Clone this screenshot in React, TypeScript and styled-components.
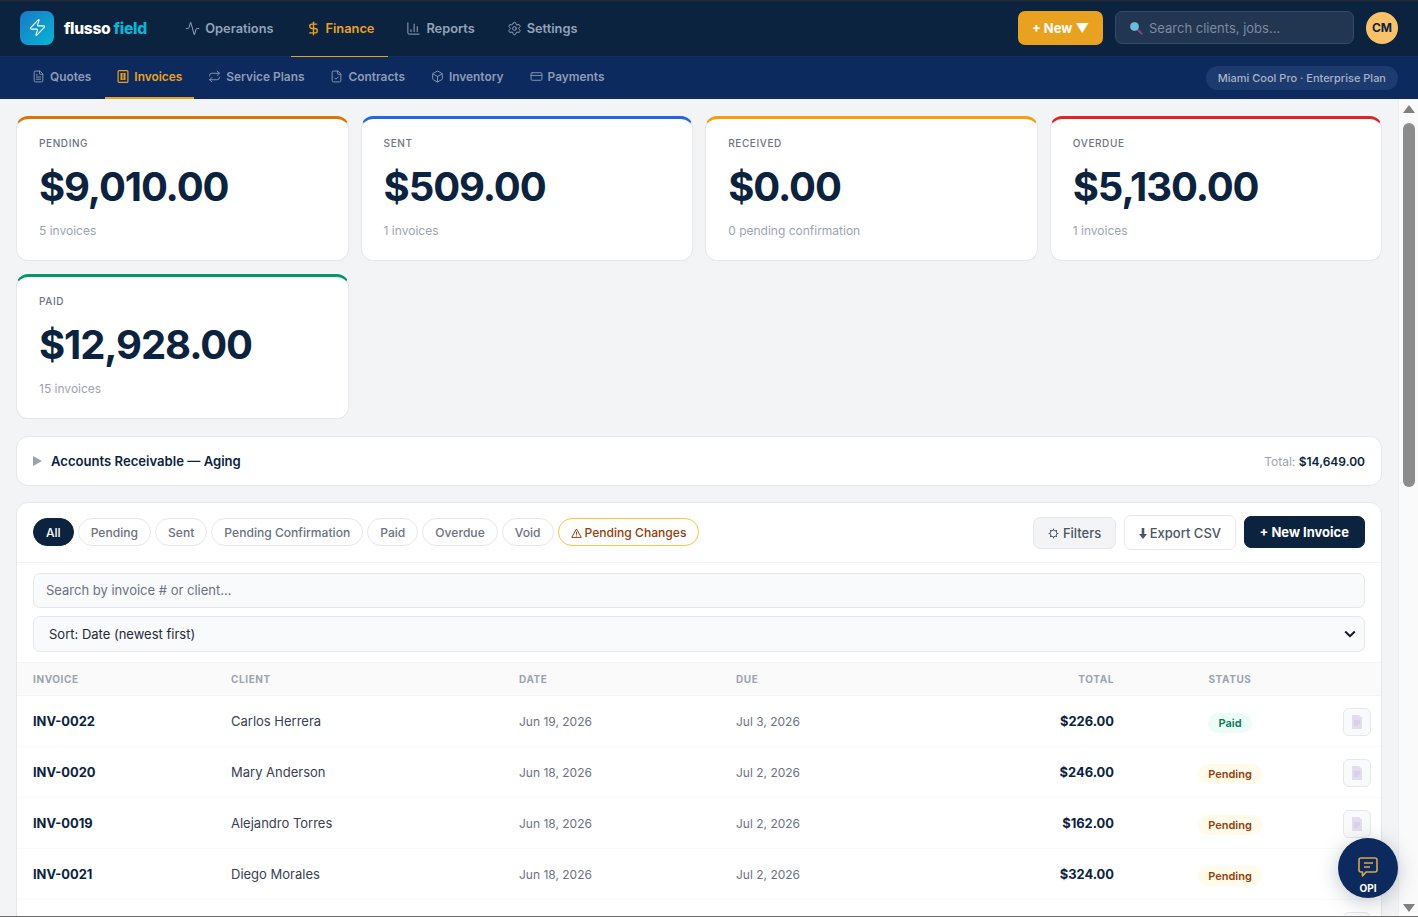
import type { FC, ReactNode } from 'react';
import {
  Activity,
  Box,
  ChartColumn,
  CreditCard,
  DollarSign,
  FileCheck,
  FileText,
  Repeat,
  Settings,
  Zap
} from 'lucide-react';
import styled, { createGlobalStyle } from 'styled-components';

const GlobalStyle = createGlobalStyle`
  html, body {
    margin: 0;
    height: 100%;
    overflow: hidden;
  }
  * {
    box-sizing: border-box;
  }
  body {
    font-family: Inter, "Liberation Sans", sans-serif;
    color: #0c2340;
    background: #f3f4f6;
  }
`;

const Shell = styled.div`
  display: flex;
  flex-direction: column;
  height: 917px;
  overflow: hidden;
  position: relative;
  border-bottom: 1px solid #6b6b6b;
`;

const TopBar = styled.header`
  display: flex;
  align-items: center;
  height: 57px;
  flex-shrink: 0;
  padding: 0 20px 2px;
  background: #0c2340;
  border-top: 1px solid #2a2a2a;
  border-bottom: 1px solid #14305c;
`;

const LogoMark = styled.div`
  display: flex;
  align-items: center;
  justify-content: center;
  width: 34px;
  height: 34px;
  border-radius: 8px;
  color: #fff;
  background: linear-gradient(135deg, #1a78c8, #06b6d4);
`;

const LogoText = styled.div`
  margin: 1px 23.5px 0 10px;
  font-size: 15.6px;
  font-weight: 800;
  letter-spacing: -0.3px;
  color: #fff;
  span {
    color: #06b6d4;
  }
`;

const MainNav = styled.nav`
  display: flex;
  align-self: stretch;
  gap: 3px;
  margin-bottom: -2px;
`;

const MainNavItem = styled.a<{ $active?: boolean }>`
  display: flex;
  align-items: center;
  gap: 5px;
  padding: 0 14px 0 15px;
  margin-bottom: -1px;
  font-size: 12.8px;
  font-weight: 600;
  color: ${(p) => (p.$active ? '#e9a21f' : '#94a3b8')};
  border-bottom: 1px solid ${(p) => (p.$active ? '#e9a21f' : 'transparent')};
`;

const TopRight = styled.div`
  display: flex;
  align-items: center;
  margin-left: auto;
`;

const NewButton = styled.button`
  width: 85px;
  height: 34px;
  border: 0;
  border-radius: 7px;
  font-family: inherit;
  font-size: 13px;
  font-weight: 700;
  color: #fff;
  background: #e9a21f;
`;

const TopSearch = styled.div`
  display: flex;
  align-items: center;
  gap: 6px;
  width: 239px;
  height: 33px;
  margin: 0 12px;
  padding-left: 13px;
  border: 1px solid #35496a;
  border-radius: 7px;
  font-size: 13px;
  color: #7c8aa0;
  background: #233651;
`;

const Avatar = styled.div`
  display: flex;
  align-items: center;
  justify-content: center;
  width: 32px;
  height: 32px;
  border-radius: 50%;
  font-size: 12px;
  font-weight: 700;
  color: #0c2340;
  background: #fbc268;
`;

const SubBar = styled.div`
  display: flex;
  align-items: stretch;
  height: 42px;
  flex-shrink: 0;
  padding: 0 20px;
  background: #0c2a5e;
`;

const SubNavItem = styled.a<{ $active?: boolean }>`
  display: flex;
  align-items: center;
  gap: 5px;
  padding: 0 12px 1px;
  margin-right: 2px;
  font-size: 11.9px;
  font-weight: 600;
  color: ${(p) => (p.$active ? '#e9a21f' : '#8d9cb6')};
  border-bottom: 2px solid ${(p) => (p.$active ? '#e9a21f' : 'transparent')};
`;

const PlanPill = styled.div`
  align-self: center;
  margin-left: auto;
  padding: 5px 12px;
  border-radius: 12px;
  font-size: 11px;
  font-weight: 500;
  line-height: 14px;
  color: #a5b3c9;
  background: #1d3b6e;
`;

const Body = styled.div`
  display: flex;
  flex: 1;
  min-height: 0;
`;

const Content = styled.main`
  flex: 1;
  min-width: 0;
  padding: 17px 16px 0;
  overflow: hidden;
`;

const ScrollTrack = styled.div`
  display: flex;
  flex-direction: column;
  align-items: center;
  width: 20px;
  padding: 6px 0 4px;
  background: #fafafa;
  border-left: 1px solid #eeeeee;
`;

const ScrollArrow = styled.div<{ $down?: boolean }>`
  width: 0;
  height: 0;
  border-left: 6px solid transparent;
  border-right: 6px solid transparent;
  ${(p) =>
    p.$down
      ? 'border-top: 8px solid #7f7f7f; margin-top: auto;'
      : 'border-bottom: 8px solid #7f7f7f;'}
`;

const ScrollThumb = styled.div`
  width: 12px;
  height: 364px;
  margin-top: 10px;
  border-radius: 6px;
  background: #8c8c8c;
`;

const StatGrid = styled.section`
  display: grid;
  grid-template-columns: repeat(4, 332.6px);
  gap: 13px 12px;
`;

const StatCard = styled.div<{ $accent: string }>`
  height: 145px;
  padding: 18px 22px 0;
  border: 1px solid #e5e7eb;
  border-top: 3px solid ${(p) => p.$accent};
  border-radius: 12px;
  background: #fff;
`;

const StatLabel = styled.div`
  font-size: 10px;
  font-weight: 500;
  line-height: 12px;
  letter-spacing: 0.6px;
  color: #6b7280;
`;

const StatValue = styled.div`
  margin-top: 14px;
  font-size: 40px;
  font-weight: 700;
  line-height: 48px;
  letter-spacing: -1.1px;
  color: #0c2340;
`;

const StatNote = styled.div`
  margin-top: 12px;
  font-size: 12px;
  line-height: 16px;
  color: #9ca3af;
`;

const AgingBar = styled.div`
  display: flex;
  align-items: center;
  height: 50px;
  margin-top: 17px;
  padding: 0 16px;
  border: 1px solid #e5e7eb;
  border-radius: 12px;
  background: #fff;
`;

const AgingCaret = styled.span`
  width: 0;
  height: 0;
  margin-right: 9px;
  border-top: 5px solid transparent;
  border-bottom: 5px solid transparent;
  border-left: 9px solid #9ca3af;
`;

const AgingTitle = styled.div`
  font-size: 13.1px;
  font-weight: 600;
  color: #0c2340;
`;

const AgingTotal = styled.div`
  margin-left: auto;
  font-size: 12px;
  color: #9ca3af;
  b {
    font-weight: 600;
    color: #0c2340;
  }
`;

const TableCard = styled.section`
  margin-top: 16px;
  border: 1px solid #e5e7eb;
  border-radius: 12px;
  background: #fff;
`;

const Toolbar = styled.div`
  display: flex;
  align-items: center;
  gap: 4px;
  height: 60px;
  padding: 0 16px 1px;
  border-bottom: 1px solid #f3f4f6;
`;

const Tab = styled.button<{ $active?: boolean; $warn?: boolean }>`
  height: 28px;
  padding: 0 12px;
  border-radius: 14px;
  font-family: inherit;
  font-size: 12.1px;
  font-weight: 500;
  border: 1px solid
    ${(p) => (p.$active ? '#0c2340' : p.$warn ? '#f5c542' : '#e5e7eb')};
  color: ${(p) => (p.$active ? '#fff' : p.$warn ? '#92400e' : '#6b7280')};
  background: ${(p) => (p.$active ? '#0c2340' : '#fff')};
`;

const ToolButton = styled.button<{ $variant: 'soft' | 'plain' | 'dark' }>`
  height: ${(p) => (p.$variant === 'plain' ? '35px' : '32px')};
  padding: 0 ${(p) => (p.$variant === 'dark' ? '15px' : p.$variant === 'plain' ? '13.5px' : '14px')};
  margin-bottom: ${(p) => (p.$variant === 'dark' ? '2px' : '0')};
  border-radius: 7px;
  font-family: inherit;
  font-size: 13px;
  font-weight: ${(p) => (p.$variant === 'dark' ? 700 : 500)};
  border: 1px solid
    ${(p) => (p.$variant === 'dark' ? '#0c2340' : '#e5e7eb')};
  color: ${(p) => (p.$variant === 'dark' ? '#fff' : '#4b5563')};
  background: ${(p) =>
    p.$variant === 'dark'
      ? '#0c2340'
      : p.$variant === 'soft'
        ? '#f3f4f6'
        : '#fff'};
`;

const ToolActions = styled.div`
  display: flex;
  align-items: center;
  gap: 8px;
  margin: 1px 0 0 auto;
`;

const FilterStack = styled.div`
  display: flex;
  flex-direction: column;
  gap: 8px;
  padding: 10px 16px;
`;

const FieldBox = styled.div<{ $select?: boolean }>`
  display: flex;
  align-items: center;
  justify-content: space-between;
  height: ${(p) => (p.$select ? '36px' : '35px')};
  padding: ${(p) => (p.$select ? '0 8px 0 15px' : '0 12px 1px')};
  border: 1px solid #e5e7eb;
  border-radius: 7px;
  font-size: 13px;
  color: ${(p) => (p.$select ? '#1f2937' : '#6b7280')};
  background: #f9fafb;
`;

const GRID_COLUMNS = '198px 288px 217px 200px 178px 229px 28px';

const HeadRow = styled.div`
  display: grid;
  grid-template-columns: ${GRID_COLUMNS};
  align-items: center;
  height: 34px;
  padding-left: 16px;
  font-size: 10px;
  font-weight: 700;
  letter-spacing: 0.6px;
  color: #9ca3af;
  background: #fafafa;
  border-top: 1px solid #f3f4f6;
  border-bottom: 1px solid #f3f4f6;
`;

const HeadTotal = styled.div`
  text-align: right;
`;

const Row = styled.div`
  display: grid;
  grid-template-columns: ${GRID_COLUMNS};
  align-items: center;
  height: 51px;
  padding-left: 16px;
  font-size: 13px;
  border-bottom: 1px solid #f9fafb;
`;

const InvoiceId = styled.div`
  font-size: 12.9px;
  font-weight: 700;
  color: #0c2340;
`;

const ClientName = styled.div`
  color: #374151;
`;

const DateCell = styled.div`
  font-size: 12px;
  color: #6b7280;
`;

const TotalCell = styled.div`
  text-align: right;
  font-size: 12.9px;
  font-weight: 700;
  color: #0c2340;
`;

const StatusCell = styled.div`
  display: flex;
  justify-content: center;
  padding-left: 3px;
`;

const StatusBadge = styled.span<{ $paid?: boolean }>`
  margin-top: 3px;
  padding: 3px 10px;
  border-radius: 10px;
  font-size: 11px;
  font-weight: 600;
  line-height: 14px;
  color: ${(p) => (p.$paid ? '#047857' : '#92400e')};
  background: ${(p) => (p.$paid ? '#ecfdf5' : '#fffbeb')};
`;

const DocButton = styled.button`
  display: flex;
  align-items: center;
  justify-content: center;
  width: 28px;
  height: 28px;
  margin-top: 2px;
  padding: 0;
  border: 1px solid #e5e7eb;
  border-radius: 6px;
  background: #f9fafb;
`;

const ChatBubble = styled.button`
  position: absolute;
  right: 20px;
  bottom: 18px;
  display: flex;
  flex-direction: column;
  align-items: center;
  gap: 4px;
  width: 60px;
  height: 60px;
  padding: 18px 0 0;
  border: 0;
  border-radius: 50%;
  font-family: inherit;
  font-size: 10px;
  font-weight: 700;
  line-height: 12px;
  color: #fff;
  background: #0c2a5e;
  box-shadow: 0 4px 20px rgba(12, 35, 64, 0.25);
`;

const DocGlyph: FC = () => (
  <svg width="12" height="14" viewBox="0 0 12 14">
    <path d="M1 0h7l3 3v11H1z" fill="#e4dcef" />
    <path d="M3 6h6M3 8h6M3 10h4" stroke="#cfc6dc" strokeWidth="1" />
  </svg>
);

const SearchGlyph: FC = () => (
  <svg width="14" height="14" viewBox="0 0 14 14">
    <path d="M8 8l4.5 4.5" stroke="#7b4a86" strokeWidth="2" strokeLinecap="round" />
    <circle cx="5.5" cy="5.5" r="4" fill="#5fc0e0" stroke="#8fb4c8" strokeWidth="0.8" />
  </svg>
);

const InvoiceGlyph: FC = () => (
  <svg width="12" height="13" viewBox="0 0 11 13">
    <rect x="0.6" y="0.6" width="9.8" height="11.8" rx="1" fill="none" stroke="#e9a21f" strokeWidth="1.2" />
    <rect x="3" y="3" width="5" height="7" fill="#e9a21f" />
    <path d="M5.5 3.5v6" stroke="#0c2a5e" strokeWidth="1" />
  </svg>
);

const WarnIcon = styled.svg`
  margin-right: 3px;
  vertical-align: -1px;
`;

const ButtonIcon = styled.svg<{ $gap: number }>`
  margin-right: ${(p) => p.$gap}px;
  vertical-align: -1px;
`;

const WarnGlyph: FC = () => (
  <WarnIcon width="11" height="10" viewBox="0 0 11 10">
    <path d="M5.5 1L10.3 9.4H.7z" fill="none" stroke="#92400e" strokeWidth="1" />
    <path d="M5.5 3.8v3M5.5 7.6v.8" stroke="#92400e" strokeWidth="1" />
  </WarnIcon>
);

const GearGlyph: FC = () => (
  <ButtonIcon $gap={4} width="11" height="11" viewBox="0 0 11 11">
    <circle cx="5.5" cy="5.5" r="3.4" fill="none" stroke="#4b5563" strokeWidth="1" />
    <path
      d="M5.5.6v1.4M5.5 9v1.4M.6 5.5H2M9 5.5h1.4M2 2l1 1M8 8l1 1M9 2L8 3M3 8L2 9"
      stroke="#4b5563"
      strokeWidth="1"
    />
  </ButtonIcon>
);

const DownGlyph: FC = () => (
  <ButtonIcon $gap={3} width="8" height="11" viewBox="0 0 8 11">
    <path d="M2.7 0h2.6v6H8l-4 5-4-5h2.7z" fill="#4b5563" />
  </ButtonIcon>
);

const ChevronGlyph: FC = () => (
  <svg width="12" height="8" viewBox="0 0 12 8">
    <path d="M1.2 1.5L6 6.2l4.8-4.7" fill="none" stroke="#111827" strokeWidth="2" />
  </svg>
);

const OpiGlyph: FC = () => (
  <svg width="22" height="22" viewBox="0 0 22 22">
    <path
      d="M4 2h14a2 2 0 0 1 2 2v10a2 2 0 0 1-2 2H9l-3.5 4v-4H4a2 2 0 0 1-2-2V4a2 2 0 0 1 2-2z"
      fill="none"
      stroke="#d9a648"
      strokeWidth="1.6"
      strokeLinejoin="round"
    />
    <path d="M7 7h9M7 11h6" stroke="#d9a648" strokeWidth="1.6" />
  </svg>
);

interface NavEntry {
  icon: ReactNode;
  label: string;
  active?: boolean;
}

const mainNav: NavEntry[] = [
  { icon: <Activity size={15} strokeWidth={1.6} />, label: 'Operations' },
  { icon: <DollarSign size={15} strokeWidth={2.2} />, label: 'Finance', active: true },
  { icon: <ChartColumn size={15} strokeWidth={1.6} />, label: 'Reports' },
  { icon: <Settings size={15} strokeWidth={1.6} />, label: 'Settings' }
];

const subNav: NavEntry[] = [
  { icon: <FileText size={13} strokeWidth={1.7} />, label: 'Quotes' },
  { icon: <InvoiceGlyph />, label: 'Invoices', active: true },
  { icon: <Repeat size={13} strokeWidth={1.7} />, label: 'Service Plans' },
  { icon: <FileCheck size={13} strokeWidth={1.7} />, label: 'Contracts' },
  { icon: <Box size={13} strokeWidth={1.7} />, label: 'Inventory' },
  { icon: <CreditCard size={13} strokeWidth={1.7} />, label: 'Payments' }
];

const stats = [
  { label: 'PENDING', value: '$9,010.00', note: '5 invoices', accent: '#d97706' },
  { label: 'SENT', value: '$509.00', note: '1 invoices', accent: '#2563eb' },
  { label: 'RECEIVED', value: '$0.00', note: '0 pending confirmation', accent: '#f59e0b' },
  { label: 'OVERDUE', value: '$5,130.00', note: '1 invoices', accent: '#dc2626' },
  { label: 'PAID', value: '$12,928.00', note: '15 invoices', accent: '#059669' }
];

const tabs = ['Pending', 'Sent', 'Pending Confirmation', 'Paid', 'Overdue', 'Void'];

const invoices = [
  { id: 'INV-0022', client: 'Carlos Herrera', date: 'Jun 19, 2026', due: 'Jul 3, 2026', total: '$226.00', status: 'Paid' },
  { id: 'INV-0020', client: 'Mary Anderson', date: 'Jun 18, 2026', due: 'Jul 2, 2026', total: '$246.00', status: 'Pending' },
  { id: 'INV-0019', client: 'Alejandro Torres', date: 'Jun 18, 2026', due: 'Jul 2, 2026', total: '$162.00', status: 'Pending' },
  { id: 'INV-0021', client: 'Diego Morales', date: 'Jun 18, 2026', due: 'Jul 2, 2026', total: '$324.00', status: 'Pending' },
  // next row is below the fold, only its action button peeks in
  { id: '', client: '', date: '', due: '', total: '', status: '' }
];

const App: FC = () => {
  return (
    <Shell>
      <GlobalStyle />
      <TopBar>
        <LogoMark>
          <Zap size={19} strokeWidth={1.4} />
        </LogoMark>
        <LogoText>
          flusso <span>field</span>
        </LogoText>
        <MainNav>
          {mainNav.map((item) => (
            <MainNavItem $active={item.active} key={item.label}>
              {item.icon}
              {item.label}
            </MainNavItem>
          ))}
        </MainNav>
        <TopRight>
          <NewButton>+ New ▼</NewButton>
          <TopSearch>
            <SearchGlyph />
            Search clients, jobs...
          </TopSearch>
          <Avatar>CM</Avatar>
        </TopRight>
      </TopBar>
      <SubBar>
        {subNav.map((item) => (
          <SubNavItem $active={item.active} key={item.label}>
            {item.icon}
            {item.label}
          </SubNavItem>
        ))}
        <PlanPill>Miami Cool Pro · Enterprise Plan</PlanPill>
      </SubBar>
      <Body>
        <Content>
          <StatGrid>
            {stats.map((stat) => (
              <StatCard $accent={stat.accent} key={stat.label}>
                <StatLabel>{stat.label}</StatLabel>
                <StatValue>{stat.value}</StatValue>
                <StatNote>{stat.note}</StatNote>
              </StatCard>
            ))}
          </StatGrid>
          <AgingBar>
            <AgingCaret />
            <AgingTitle>Accounts Receivable — Aging</AgingTitle>
            <AgingTotal>
              Total: <b>$14,649.00</b>
            </AgingTotal>
          </AgingBar>
          <TableCard>
            <Toolbar>
              <Tab $active>All</Tab>
              {tabs.map((tab) => (
                <Tab key={tab}>{tab}</Tab>
              ))}
              <Tab $warn>
                <WarnGlyph />
                Pending Changes
              </Tab>
              <ToolActions>
                <ToolButton $variant="soft">
                  <GearGlyph />
                  Filters
                </ToolButton>
                <ToolButton $variant="plain">
                  <DownGlyph />
                  Export CSV
                </ToolButton>
                <ToolButton $variant="dark">+ New Invoice</ToolButton>
              </ToolActions>
            </Toolbar>
            <FilterStack>
              <FieldBox>Search by invoice # or client...</FieldBox>
              <FieldBox $select>
                Sort: Date (newest first)
                <ChevronGlyph />
              </FieldBox>
            </FilterStack>
            <HeadRow>
              <div>INVOICE</div>
              <div>CLIENT</div>
              <div>DATE</div>
              <div>DUE</div>
              <HeadTotal>TOTAL</HeadTotal>
              <StatusCell>STATUS</StatusCell>
            </HeadRow>
            {invoices.map((inv, index) => (
              <Row key={index}>
                <InvoiceId>{inv.id}</InvoiceId>
                <ClientName>{inv.client}</ClientName>
                <DateCell>{inv.date}</DateCell>
                <DateCell>{inv.due}</DateCell>
                <TotalCell>{inv.total}</TotalCell>
                <StatusCell>
                  {inv.status ? (
                    <StatusBadge $paid={inv.status === 'Paid'}>{inv.status}</StatusBadge>
                  ) : null}
                </StatusCell>
                <DocButton>
                  <DocGlyph />
                </DocButton>
              </Row>
            ))}
          </TableCard>
        </Content>
        <ScrollTrack>
          <ScrollArrow />
          <ScrollThumb />
          <ScrollArrow $down />
        </ScrollTrack>
      </Body>
      <ChatBubble>
        <OpiGlyph />
        OPI
      </ChatBubble>
    </Shell>
  );
};

export default App;
